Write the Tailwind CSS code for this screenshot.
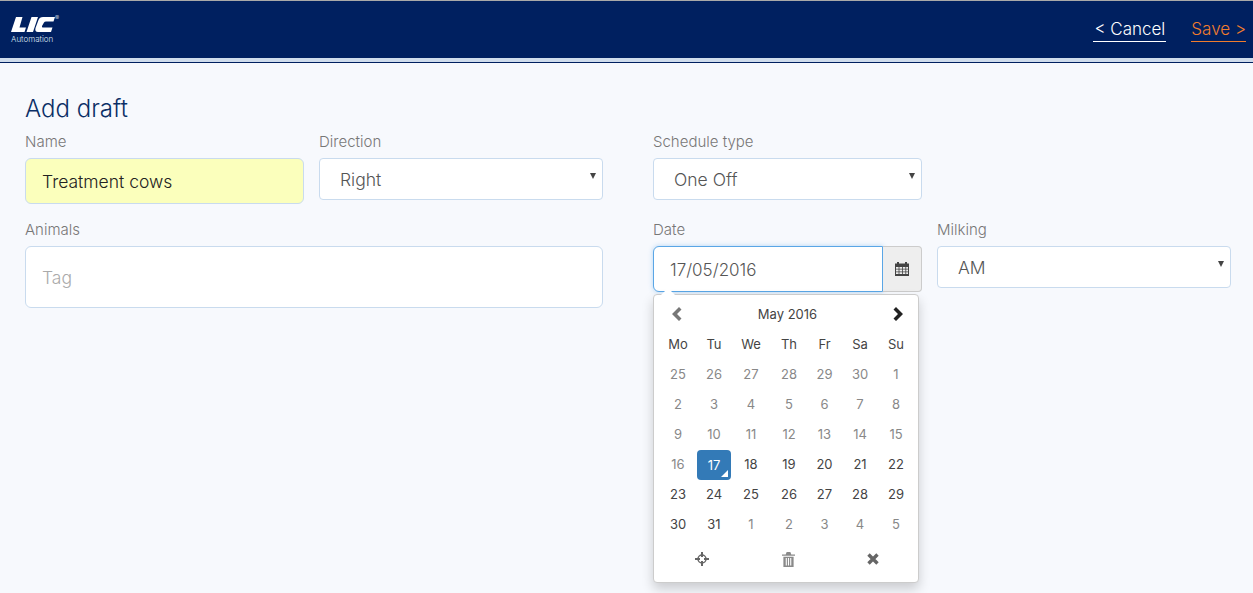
<!DOCTYPE html>
<html lang="en">
<head>
    <meta charset="UTF-8">
    <title>Add draft</title>
    <script src="https://cdn.jsdelivr.net/npm/@tailwindcss/browser@4"></script>
</head>
<body class="bg-[#f7f9fd] font-['Inter',sans-serif] font-light text-[#555] h-[593px] overflow-hidden">
    <!-- header -->
    <header class="h-[63px] bg-[#002060] border-t border-[#a9a9a9] flex flex-col">
        <div class="flex-1 flex items-start justify-between">
            <div class="relative pt-[15px] w-[70px]">
                <svg viewBox="0 16 60 17" class="w-[60px] h-[17px]">
                    <path fill="#fff" d="M16 17h6.500l-3 10.500H26L24.500 32H11zM31.500 17H38l-5 15h-6.500zM55 17H43q-3.500 0-4.500 3l-3 8q-1 4 2.500 4h13l1.500-4.500H43q-1.500 0-1-1.500l2-3.500q.5-1 2-1h7.500z"/>
                </svg>
                <span class="absolute left-[55px] top-[13px] text-[6px] leading-[8px] text-white">®</span>
                <div class="pl-[11px] mt-[1px] text-[8px] leading-[10px] text-[#dfe6f2]">Automation</div>
            </div>
            <nav class="flex gap-[25px] pr-[7px] pt-[18px] text-[17px] leading-[21px]">
                <a class="text-white border-b border-white pb-[1px] px-[1px]">&lt; Cancel</a>
                <a class="text-[#f07c2e] border-b border-[#f07c2e] pb-[1px]">Save &gt;</a>
            </nav>
        </div>
        <div class="h-[4px] bg-[#cfdcec]"></div>
        <div class="h-[1px] bg-[#002060]"></div>
    </header>

    <main class="px-[25px] pt-[33px]">
        <h1 class="text-[24px] leading-[26px] text-[#0b2f66]">Add draft</h1>
        <div class="flex mt-[9px]">
            <div class="w-[578px] shrink-0">
                <div class="flex gap-[15px]">
                    <div class="w-[279px]">
                        <label class="block text-[15px] leading-[22px] text-[#777]">Name</label>
                        <input value="Treatment cows" class="mt-[5px] w-full h-[46px] rounded-[6px] border border-[#c9dbee] bg-[#fbffbc] pl-[16px] pt-[1px] text-[17.500px] text-[#222]">
                    </div>
                    <div class="w-[284px]">
                        <label class="block text-[15px] leading-[22px] text-[#777]">Direction</label>
                        <div class="mt-[5px] relative h-[42px] rounded-[4px] border border-[#c9dbee] bg-white pl-[20px] text-[17.500px] leading-[42px]">Right
                            <span class="absolute right-[6px] top-[14px] w-0 h-0 border-x-[3px] border-x-transparent border-t-[6px] border-t-[#444]"></span>
                        </div>
                    </div>
                </div>
                <label class="block mt-[15px] text-[15px] leading-[22px] text-[#777]">Animals</label>
                <input placeholder="Tag" class="mt-[5px] w-full h-[62px] rounded-[6px] border border-[#c9dbee] bg-white pl-[16px] pt-[1px] text-[17.500px] placeholder:text-[#aaa]">
            </div>
            <div class="ml-[50px] w-[578px] shrink-0">
                <div class="w-[269px]">
                    <label class="block text-[15px] leading-[22px] text-[#777]">Schedule type</label>
                    <div class="mt-[5px] relative h-[42px] rounded-[4px] border border-[#c9dbee] bg-white pl-[20px] text-[17.500px] leading-[42px]">One Off
                        <span class="absolute right-[6px] top-[14px] w-0 h-0 border-x-[3px] border-x-transparent border-t-[6px] border-t-[#444]"></span>
                    </div>
                </div>
                <div class="flex gap-[15px] mt-[19px]">
                    <div class="w-[269px] relative">
                        <label class="block text-[15px] leading-[22px] text-[#777]">Date</label>
                        <div class="mt-[5px] flex h-[46px]">
                            <input value="17/05/2016" class="w-[230px] h-full rounded-l-[6px] border border-[#5aa6e6] shadow-[0_0_5px_rgba(90,166,230,0.45)] bg-white pl-[16px] pt-[2px] text-[17px] text-[#555]">
                            <div class="flex-1 flex items-center justify-center bg-[#eeeeee] border border-l-0 border-[#ccc] rounded-r-[4px]">
                                <svg viewBox="0 0 14 14" class="w-[14px] h-[14px]">
                                    <path fill="#444" fill-rule="evenodd" d="M2 0h2v1.500h6V0h2v1.500h2V14H0V1.500h2zM1 5v1.800h2.600V5zm3.400 0v1.800H7V5zm3.400 0v1.800h2.600V5zm3.400 0v1.800H13V5zM1 7.600v1.800h2.600V7.600zm3.400 0v1.800H7V7.600zm3.400 0v1.800h2.600V7.600zm3.400 0v1.800H13V7.600zM1 10.200V12h2.600v-1.800zm3.400 0V12H7v-1.800zm3.400 0V12h2.600v-1.800zm3.400 0V12H13v-1.800z"/>
                                </svg>
                            </div>
                        </div>
                        <!-- datepicker popup -->
                        <div class="absolute left-0 top-[75px] w-[266px] h-[289px] bg-white rounded-[4px] border border-[#ccc] shadow-[0_6px_12px_rgba(0,0,0,0.18)] pl-[5px] text-[13px] font-normal text-[#444] z-10">
                            <span class="absolute left-[7px] -top-[7px] w-0 h-0 border-x-[7px] border-x-transparent border-b-[7px] border-b-white"></span>
                            <div class="flex items-center h-[35px] pt-[5px] w-[255px] relative">
                                <svg viewBox="0 0 12 14" class="absolute left-[11px] top-[12px] w-[12px] h-[14px]"><path fill="#777" d="M9 0l2.500 2.500L7 7l4.500 4.500L9 14 2 7z"/></svg>
                                <span class="flex-1 text-center pl-[2px] text-[#444]">May 2016</span>
                                <svg viewBox="0 0 12 14" class="absolute right-[9px] top-[12px] w-[12px] h-[14px]"><path fill="#222" d="M3 0L.500 2.500 5 7 .500 11.500 3 14l7-7z"/></svg>
                            </div>
                            <div class="grid grid-cols-[38px_34px_40px_36px_35px_36px_36px] auto-rows-[30px] items-center text-center">
                                <div>Mo</div><div>Tu</div><div>We</div><div>Th</div><div>Fr</div><div>Sa</div><div>Su</div>
                                <div class="text-[#888]">25</div><div class="text-[#888]">26</div><div class="text-[#888]">27</div><div class="text-[#888]">28</div><div class="text-[#888]">29</div><div class="text-[#888]">30</div><div class="text-[#888]">1</div>
                                <div class="text-[#888]">2</div><div class="text-[#888]">3</div><div class="text-[#888]">4</div><div class="text-[#888]">5</div><div class="text-[#888]">6</div><div class="text-[#888]">7</div><div class="text-[#888]">8</div>
                                <div class="text-[#888]">9</div><div class="text-[#888]">10</div><div class="text-[#888]">11</div><div class="text-[#888]">12</div><div class="text-[#888]">13</div><div class="text-[#888]">14</div><div class="text-[#888]">15</div>
                                <div class="text-[#888]">16</div>
                                <div class="relative h-[30px] leading-[30px] rounded-[4px] bg-[#337ab7] text-white">17<span class="absolute right-[3px] bottom-[3px] w-0 h-0 border-l-[7px] border-l-transparent border-b-[7px] border-b-white"></span></div>
                                <div>18</div><div>19</div><div>20</div><div>21</div><div>22</div>
                                <div>23</div><div>24</div><div>25</div><div>26</div><div>27</div><div>28</div><div>29</div>
                                <div>30</div><div>31</div><div class="text-[#888]">1</div><div class="text-[#888]">2</div><div class="text-[#888]">3</div><div class="text-[#888]">4</div><div class="text-[#888]">5</div>
                            </div>
                            <div class="flex h-[38px] items-center pl-[36px] gap-[72.500px]">
                                <svg viewBox="0 0 14 14" class="w-[14px] h-[14px]"><path fill="none" stroke="#666" stroke-width="2" d="M7 0v5M7 9v5M0 7h5M9 7h5"/><circle cx="7" cy="7" r="4" fill="none" stroke="#666" stroke-width="1.500"/></svg>
                                <svg viewBox="0 0 14 16" class="w-[13px] h-[15px]"><path fill="#8a8a8a" fill-rule="evenodd" d="M5 0h4l1 2.500h4V4H0V2.500h4zM1.500 5h11v11h-11zM4 6.500V14.500h1.200V6.500zM6.400 6.500V14.500h1.200V6.500zM8.800 6.500V14.500H10V6.500z"/></svg>
                                <svg viewBox="0 0 12 12" class="w-[12px] h-[12px]"><path fill="none" stroke="#666" stroke-width="3.400" d="M1.500 1.500l9 9M10.500 1.500l-9 9"/></svg>
                            </div>
                        </div>
                    </div>
                    <div class="w-[294px]">
                        <label class="block text-[15px] leading-[22px] text-[#777]">Milking</label>
                        <div class="mt-[5px] relative h-[42px] rounded-[4px] border border-[#c9dbee] bg-white pl-[20px] text-[17.500px] leading-[42px]">AM
                            <span class="absolute right-[6px] top-[14px] w-0 h-0 border-x-[3px] border-x-transparent border-t-[6px] border-t-[#444]"></span>
                        </div>
                    </div>
                </div>
            </div>
        </div>
    </main>
</body>
</html>
